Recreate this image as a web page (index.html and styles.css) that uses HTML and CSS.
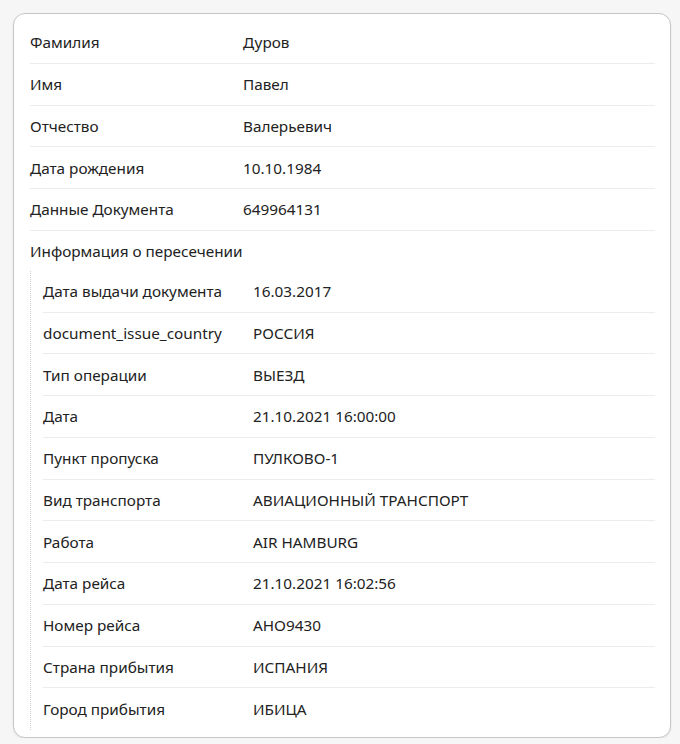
FILE: index.html
```html
<!DOCTYPE html>
<html lang="ru">

<head>
    <meta charset="UTF-8">
    <meta name="viewport" content="width=device-width, initial-scale=1.0">
    <link rel="stylesheet" href="styles.css">
    <title>Карточка</title>
</head>

<body>
    <div class="card">
        <div class="row">
            <span class="label">Фамилия</span>
            <span class="value">Дуров</span>
        </div>
        <div class="row">
            <span class="label">Имя</span>
            <span class="value">Павел</span>
        </div>
        <div class="row">
            <span class="label">Отчество</span>
            <span class="value">Валерьевич</span>
        </div>
        <div class="row">
            <span class="label">Дата рождения</span>
            <span class="value">10.10.1984</span>
        </div>
        <div class="row">
            <span class="label">Данные Документа</span>
            <span class="value">649964131</span>
        </div>
        <div class="section-title">Информация о пересечении</div>
        <div class="nested">
            <div class="row">
                <span class="label">Дата выдачи документа</span>
                <span class="value">16.03.2017</span>
            </div>
            <div class="row">
                <span class="label">document_issue_country</span>
                <span class="value">РОССИЯ</span>
            </div>
            <div class="row">
                <span class="label">Тип операции</span>
                <span class="value">ВЫЕЗД</span>
            </div>
            <div class="row">
                <span class="label">Дата</span>
                <span class="value">21.10.2021 16:00:00</span>
            </div>
            <div class="row">
                <span class="label">Пункт пропуска</span>
                <span class="value">ПУЛКОВО-1</span>
            </div>
            <div class="row">
                <span class="label">Вид транспорта</span>
                <span class="value">АВИАЦИОННЫЙ ТРАНСПОРТ</span>
            </div>
            <div class="row">
                <span class="label">Работа</span>
                <span class="value">AIR HAMBURG</span>
            </div>
            <div class="row">
                <span class="label">Дата рейса</span>
                <span class="value">21.10.2021 16:02:56</span>
            </div>
            <div class="row">
                <span class="label">Номер рейса</span>
                <span class="value">AHO9430</span>
            </div>
            <div class="row">
                <span class="label">Страна прибытия</span>
                <span class="value">ИСПАНИЯ</span>
            </div>
            <div class="row">
                <span class="label">Город прибытия</span>
                <span class="value">ИБИЦА</span>
            </div>
        </div>
    </div>
</body>

</html>
```

FILE: styles.css
```css
body {
    margin: 0;
    background-color: #f6f6f6;
    font-family: 'Noto Sans', sans-serif;
    font-size: 15.3px;
    color: #222;
}

.card {
    margin: 13px 0 0 13px;
    width: 658px;
    box-sizing: border-box;
    background-color: #fff;
    border: 1px solid #c6c6c6;
    border-radius: 12px;
    padding: 8px 15px 7px 16px;
    box-shadow: 0 1px 2px rgba(0, 0, 0, .08);
}

.row {
    display: flex;
    align-items: center;
    height: 41.75px;
    box-sizing: border-box;
    border-bottom: 1px solid #ececec;
}

.nested .row:last-child {
    border-bottom: none;
}

.label {
    width: 213px;
    flex-shrink: 0;
}

.section-title {
    height: 40px;
    display: flex;
    align-items: center;
}

.nested {
    border-left: 1px dotted #d0d0d0;
    padding-left: 12px;
}

.nested .label {
    width: 210px;
}
```
